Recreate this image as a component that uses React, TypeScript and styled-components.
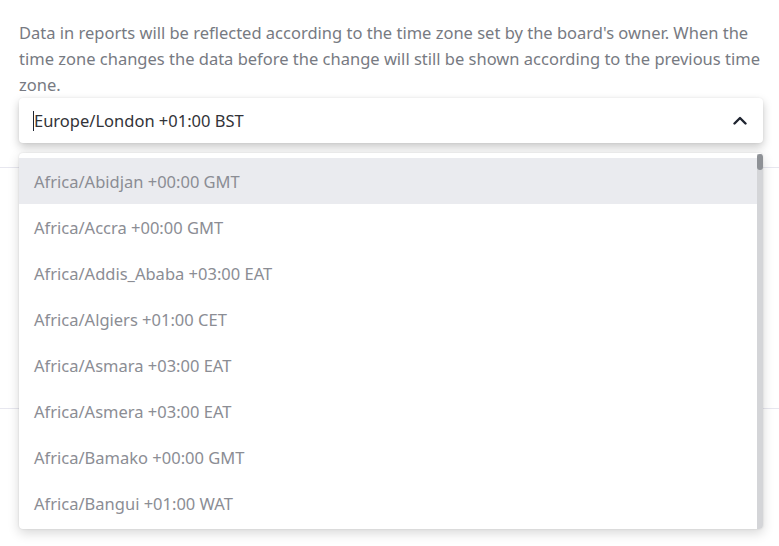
import React from "react";
import styled, { createGlobalStyle } from "styled-components";

const GlobalStyle = createGlobalStyle`
  html, body {
    margin: 0;
    padding: 0;
    background: #ffffff;
  }
  body {
    font-family: "Noto Sans", "Open Sans", sans-serif;
    -webkit-font-smoothing: antialiased;
  }
`;

const ZONES = [
  "Africa/Abidjan +00:00 GMT",
  "Africa/Accra +00:00 GMT",
  "Africa/Addis_Ababa +03:00 EAT",
  "Africa/Algiers +01:00 CET",
  "Africa/Asmara +03:00 EAT",
  "Africa/Asmera +03:00 EAT",
  "Africa/Bamako +00:00 GMT",
  "Africa/Bangui +01:00 WAT",
];

const Page = styled.div`
  position: relative;
  width: 779px;
  height: 546px;
  overflow: hidden;
`;

const Section = styled.div`
  padding: 20px 16px 0 19px;
`;

const Description = styled.p`
  margin: 0;
  font-size: 16.5px;
  line-height: 26px;
  color: #777a82;
`;

const SelectWrap = styled.div`
  position: relative;
`;

const Control = styled.div`
  height: 45px;
  display: flex;
  align-items: center;
  justify-content: space-between;
  padding: 0 16px 0 14px;
  background: #ffffff;
  border-radius: 4px;
  box-shadow: 0 4px 10px rgba(0, 0, 0, 0.22), 0 0 2px rgba(0, 0, 0, 0.08);
  box-sizing: border-box;
`;

const Value = styled.span`
  display: flex;
  align-items: center;
  font-size: 16.5px;
  color: #323338;
`;

const Caret = styled.span`
  display: inline-block;
  width: 1px;
  height: 20px;
  background: #1f2430;
`;

const Menu = styled.div`
  position: absolute;
  top: 55px;
  left: 0;
  right: 0;
  height: 376px;
  display: flex;
  background: #ffffff;
  border-radius: 4px;
  box-shadow: 0 4px 12px rgba(0, 0, 0, 0.16), 0 0 2px rgba(0, 0, 0, 0.12);
  overflow: hidden;
  z-index: 2;
`;

const List = styled.ul`
  flex: 1;
  margin: 0;
  padding: 5px 0 0 0;
  list-style: none;
`;

const Option = styled.li<{ $active?: boolean }>`
  height: 46px;
  display: flex;
  align-items: center;
  padding-left: 15px;
  font-size: 16.5px;
  color: #8b8d94;
  background: ${(p) => (p.$active ? "#eaebef" : "transparent")};
  white-space: nowrap;
`;

const ScrollTrack = styled.div`
  width: 6px;
  margin-top: 1px;
  background: #d4d5d8;
  display: flex;
  flex-direction: column;
`;

const ScrollThumb = styled.div`
  height: 16px;
  background: #8e9196;
  border-radius: 3px;
`;

const Rows = styled.div`
  margin-top: 24px;
`;

const Row = styled.div<{ $height: number }>`
  height: ${(p) => p.$height}px;
  border-bottom: 1px solid #e7e7ef;
`;

const ChevronUp = () => (
  <svg width="14" height="9" viewBox="0 0 14 9" fill="none">
    <path
      d="M1.5 7.5 L7 2 L12.5 7.5"
      stroke="#1f2430"
      strokeWidth="2.4"
      strokeLinecap="round"
      strokeLinejoin="round"
    />
  </svg>
);

const App: React.FC = () => {
  return (
    <Page>
      <GlobalStyle />
      <Section>
        <Description>
          Data in reports will be reflected according to the time zone set by the board's owner. When the
          time zone changes the data before the change will still be shown according to the previous time
          zone.
        </Description>
        <SelectWrap>
          <Control>
            <Value>
              <Caret />
              Europe/London +01:00 BST
            </Value>
            <ChevronUp />
          </Control>
          <Menu>
            <List>
              {ZONES.map((z, i) => (
                <Option key={z} $active={i === 0}>
                  {z}
                </Option>
              ))}
            </List>
            <ScrollTrack>
              <ScrollThumb />
            </ScrollTrack>
          </Menu>
        </SelectWrap>
      </Section>
      <Rows>
        <Row $height={0} />
        <Row $height={240} />
      </Rows>
    </Page>
  );
};

export default App;
